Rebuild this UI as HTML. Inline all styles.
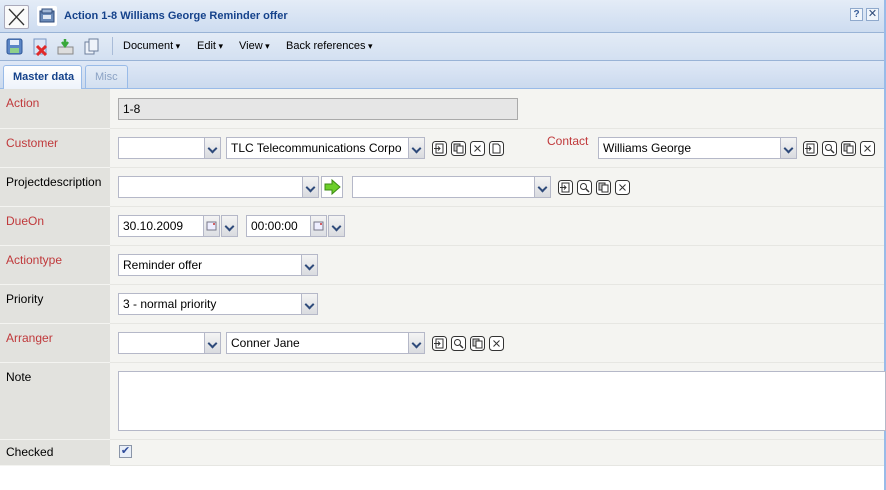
<!DOCTYPE html>
<html><head><meta charset="utf-8"><style>
*{box-sizing:border-box;margin:0;padding:0}
body{width:886px;height:490px;background:#fff;font-family:"Liberation Sans",sans-serif;font-size:12px;color:#000;position:relative;overflow:hidden}
.a{position:absolute}
.title{left:0;top:0;width:886px;height:33px;background:linear-gradient(#e4ecf7,#cddcf0);border-bottom:1px solid #99b3d6}
.tb{left:0;top:33px;width:886px;height:28px;background:linear-gradient(#e3ebf6,#d3e0f1);border-bottom:1px solid #99b3d6}
.tabs{left:0;top:61px;width:886px;height:28px;background:linear-gradient(#dfe8f6,#cbdaee);border-bottom:1px solid #99bbe8}
.lab{left:0;width:110px;background:#e2e2de;padding:7px 6px;font-size:12px;border-bottom:1px solid #f4f4f1}
.val{left:110px;width:774px;background:#f4f4f1;border-bottom:1px solid #e6e6e2}
.red{color:#c0393b}
.in{position:absolute;height:22px;background:#fff;border:1px solid #b5b8c8;padding:3px 4px;font-size:12px;white-space:nowrap;overflow:hidden}
.dd{position:absolute;width:17px;height:22px;border:1px solid #b5b8c8;background:linear-gradient(#f4f4f4,#d9dbe0)}
.dd:after{content:"";position:absolute;left:4px;top:7px;width:5px;height:5px;border-right:2px solid #2e4a7a;border-bottom:2px solid #2e4a7a;transform:rotate(45deg)}
.ic{position:absolute;width:15px;height:15px}
.menu{position:absolute;top:40px;font-size:11px}
.menu:after{content:" ▾";font-size:9px}
</style></head><body>
<svg width="0" height="0" style="position:absolute"><defs>
<g id="b"><rect x="0.5" y="0.5" width="14" height="14" rx="3" fill="#fff" stroke="#333"/></g>
<g id="i1"><use href="#b"/><rect x="4" y="3" width="7" height="9" fill="none" stroke="#333"/><path d="M2 7.5h6M6 5.5l2 2-2 2" stroke="#333" fill="none"/></g>
<g id="i2"><use href="#b"/><circle cx="6.5" cy="6.5" r="3" fill="none" stroke="#333"/><path d="M9 9l3 3" stroke="#333" stroke-width="1.5"/></g>
<g id="i3"><use href="#b"/><rect x="3" y="3" width="6" height="7" fill="#ccc" stroke="#333"/><rect x="6" y="5" width="6" height="7" fill="#fff" stroke="#333"/></g>
<g id="i4"><use href="#b"/><path d="M4.5 4.5l6 6M10.5 4.5l-6 6" stroke="#333"/></g>
<g id="i5"><use href="#b"/><path d="M4 3h5l2 2v7H4z" fill="none" stroke="#333"/></g>
</defs></svg>
<div class="a title"></div>
<div class="a" style="left:4px;top:5px;width:25px;height:24px;background:#fafafa;border:1px solid #aab;border-radius:2px"><svg width="23" height="22"><path d="M4 3L19 19M19 3L4 19" stroke="#333" stroke-width="1.3"/></svg></div>
<div class="a" style="left:37px;top:6px;width:20px;height:20px;background:#fff;border-radius:2px"><svg width="20" height="20"><rect x="3" y="5" width="14" height="11" fill="#6a8ab8" stroke="#2d4a78"/><rect x="5" y="3" width="10" height="4" fill="#9fb6d6" stroke="#2d4a78"/><rect x="6" y="9" width="8" height="4" fill="#dfe8f4"/></svg></div>
<div class="a" style="left:64px;top:10px;font-weight:bold;color:#15428b;font-size:11px">Action 1-8 Williams George Reminder offer</div>
<div class="a" style="left:850px;top:8px;width:13px;height:13px;border:1px solid #8fa9cc;background:#f0f5fb;font-size:10px;font-weight:bold;color:#3a5f9a;text-align:center;line-height:11px">?</div>
<div class="a" style="left:866px;top:8px;width:13px;height:13px;border:1px solid #8fa9cc;background:#f0f5fb;font-size:11px;color:#2d4a78;text-align:center;line-height:11px">✕</div>
<div class="a tb"></div>
<svg class="a" style="left:6px;top:38px" width="110" height="18">
<rect x="1" y="1" width="15" height="15" rx="2" fill="#5b86c5" stroke="#2f5796"/><rect x="4" y="2" width="9" height="5" fill="#e8eef8"/><rect x="4" y="10" width="9" height="5" fill="#8fd08a"/>
<rect x="28" y="1" width="12" height="15" fill="#dbe6f5" stroke="#7a97c2"/><path d="M31 8L40 17M40 8L31 17" stroke="#e02a2a" stroke-width="3"/>
<rect x="52" y="9" width="15" height="7" fill="#ddd" stroke="#888"/><path d="M59 1v6M56 4l3 4 3-4" stroke="#3aa83a" stroke-width="2.5" fill="none"/>
<rect x="79" y="4" width="9" height="12" fill="#eef3fa" stroke="#6d7f9c"/><rect x="83" y="1" width="9" height="12" fill="#eef3fa" stroke="#6d7f9c"/>
</svg>
<div class="a" style="left:112px;top:37px;width:1px;height:18px;background:#a9bcd8"></div>
<div class="menu" style="left:123px">Document</div>
<div class="menu" style="left:197px">Edit</div>
<div class="menu" style="left:239px">View</div>
<div class="menu" style="left:286px">Back references</div>
<div class="a tabs"></div>
<div class="a" style="left:3px;top:65px;width:79px;height:24px;background:linear-gradient(#fff,#eef3fb);border:1px solid #99bbe8;border-bottom:none;border-radius:3px 3px 0 0;font-weight:bold;color:#15428b;font-size:11px;padding:5px 0 0 9px">Master data</div>
<div class="a" style="left:85px;top:65px;width:43px;height:23px;background:linear-gradient(#e4ecf7,#d2dff0);border:1px solid #99bbe8;border-bottom:none;border-radius:3px 3px 0 0;color:#8ba2c4;font-size:11px;padding:5px 0 0 9px">Misc</div>
<div class="a" style="left:884px;top:0;width:2px;height:490px;background:#99bbe8"></div>

<div class="a lab red" style="top:89px;height:40px">Action</div><div class="a val" style="top:89px;height:40px"></div>
<div class="a lab red" style="top:129px;height:39px">Customer</div><div class="a val" style="top:129px;height:39px"></div>
<div class="a lab" style="top:168px;height:39px">Projectdescription</div><div class="a val" style="top:168px;height:39px"></div>
<div class="a lab red" style="top:207px;height:39px">DueOn</div><div class="a val" style="top:207px;height:39px"></div>
<div class="a lab red" style="top:246px;height:39px">Actiontype</div><div class="a val" style="top:246px;height:39px"></div>
<div class="a lab" style="top:285px;height:39px">Priority</div><div class="a val" style="top:285px;height:39px"></div>
<div class="a lab red" style="top:324px;height:39px">Arranger</div><div class="a val" style="top:324px;height:39px"></div>
<div class="a lab" style="top:363px;height:77px">Note</div><div class="a val" style="top:363px;height:77px"></div>
<div class="a lab" style="top:440px;height:26px;padding-top:5px">Checked</div><div class="a val" style="top:440px;height:26px"></div>

<div class="in" style="left:118px;top:98px;width:400px;background:#e6e6e6;border-color:#aaa">1-8</div>

<div class="in" style="left:118px;top:137px;width:88px"></div><div class="dd" style="left:204px;top:137px"></div>
<div class="in" style="left:226px;top:137px;width:183px">TLC Telecommunications Corpo</div><div class="dd" style="left:408px;top:137px"></div>
<svg class="ic" style="left:432px;top:141px"><use href="#i1"/></svg><svg class="ic" style="left:451px;top:141px"><use href="#i3"/></svg><svg class="ic" style="left:470px;top:141px"><use href="#i4"/></svg><svg class="ic" style="left:489px;top:141px"><use href="#i5"/></svg>
<div class="a red" style="left:547px;top:134px">Contact</div>
<div class="in" style="left:598px;top:137px;width:184px">Williams George</div><div class="dd" style="left:780px;top:137px"></div>
<svg class="ic" style="left:803px;top:141px"><use href="#i1"/></svg><svg class="ic" style="left:822px;top:141px"><use href="#i2"/></svg><svg class="ic" style="left:841px;top:141px"><use href="#i3"/></svg><svg class="ic" style="left:860px;top:141px"><use href="#i4"/></svg>

<div class="in" style="left:118px;top:176px;width:186px"></div><div class="dd" style="left:302px;top:176px"></div>
<div class="a" style="left:321px;top:176px;width:22px;height:22px;border:1px solid #b5b8c8;background:#fff"><svg width="20" height="20"><path d="M3 7h7V3l8 7-8 7v-4H3z" fill="#6ccf2a" stroke="#3c8a14"/></svg></div>
<div class="in" style="left:352px;top:176px;width:184px"></div><div class="dd" style="left:534px;top:176px"></div>
<svg class="ic" style="left:558px;top:180px"><use href="#i1"/></svg><svg class="ic" style="left:577px;top:180px"><use href="#i2"/></svg><svg class="ic" style="left:596px;top:180px"><use href="#i3"/></svg><svg class="ic" style="left:615px;top:180px"><use href="#i4"/></svg>

<div class="in" style="left:118px;top:215px;width:87px">30.10.2009</div>
<div class="a" style="left:203px;top:215px;width:17px;height:22px;border:1px solid #b5b8c8;background:linear-gradient(#f4f4f4,#dcdee3)"><svg width="15" height="20"><rect x="3" y="6" width="9" height="8" fill="#eef" stroke="#778"/><circle cx="10" cy="8" r="1" fill="#c33"/></svg></div><div class="dd" style="left:221px;top:215px"></div>
<div class="in" style="left:246px;top:215px;width:65px">00:00:00</div>
<div class="a" style="left:310px;top:215px;width:17px;height:22px;border:1px solid #b5b8c8;background:linear-gradient(#f4f4f4,#dcdee3)"><svg width="15" height="20"><rect x="3" y="6" width="9" height="8" fill="#eef" stroke="#778"/><circle cx="10" cy="8" r="1" fill="#c33"/></svg></div><div class="dd" style="left:328px;top:215px"></div>

<div class="in" style="left:118px;top:254px;width:186px">Reminder offer</div><div class="dd" style="left:301px;top:254px"></div>
<div class="in" style="left:118px;top:293px;width:186px">3 - normal priority</div><div class="dd" style="left:301px;top:293px"></div>

<div class="in" style="left:118px;top:332px;width:88px"></div><div class="dd" style="left:204px;top:332px"></div>
<div class="in" style="left:226px;top:332px;width:183px">Conner Jane</div><div class="dd" style="left:408px;top:332px"></div>
<svg class="ic" style="left:432px;top:336px"><use href="#i1"/></svg><svg class="ic" style="left:451px;top:336px"><use href="#i2"/></svg><svg class="ic" style="left:470px;top:336px"><use href="#i3"/></svg><svg class="ic" style="left:489px;top:336px"><use href="#i4"/></svg>

<div class="a" style="left:118px;top:371px;width:768px;height:60px;background:#fff;border:1px solid #b5b8c8"></div>
<div class="a" style="left:119px;top:445px;width:13px;height:13px;border:1px solid #8a95a8;background:#e8eef8;font-size:11px;color:#2d4a9a;line-height:11px;text-align:center">✔</div>
</body></html>
